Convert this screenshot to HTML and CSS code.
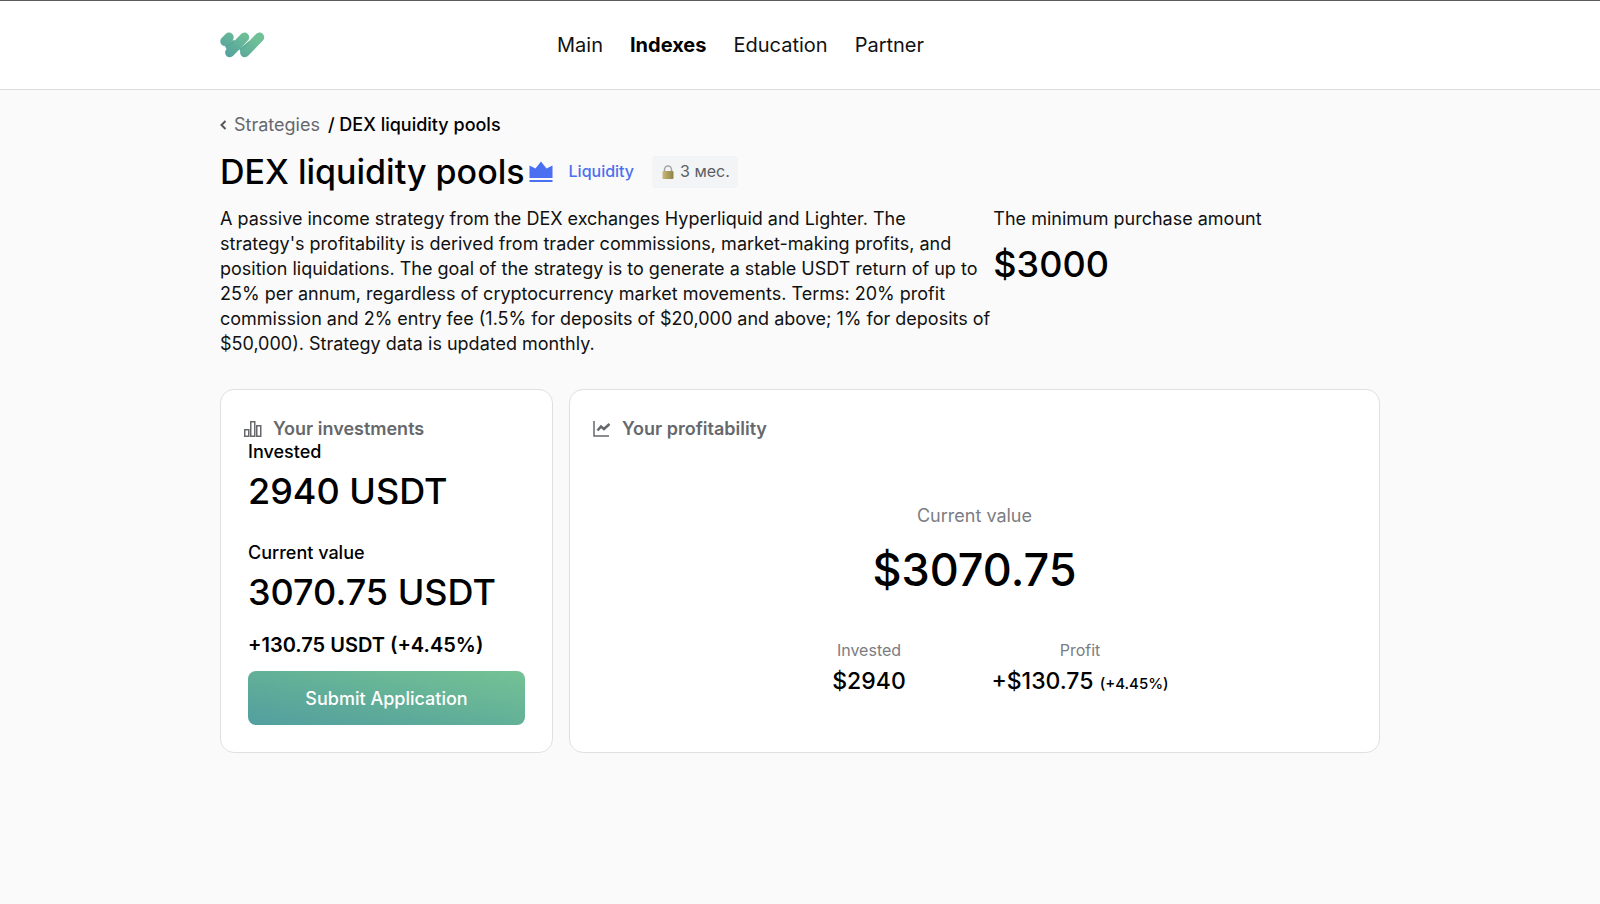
FILE: index.html
```html
<!DOCTYPE html>
<html lang="en">
<head>
<meta charset="utf-8">
<title>DEX liquidity pools</title>
<link rel="stylesheet" href="styles.css">
</head>
<body>
<header class="header">
  <div class="container header-inner">
    <a class="logo" href="#" aria-label="Home">
      <svg width="45" height="26" viewBox="0 0 45 26" fill="none" stroke-linecap="round" stroke-width="9.500">
        <defs>
          <linearGradient id="brand" gradientUnits="userSpaceOnUse" x1="6" y1="26" x2="24" y2="0">
            <stop offset="0" stop-color="#529fa0"/>
            <stop offset="1" stop-color="#6fc096"/>
          </linearGradient>
        </defs>
        <path stroke="url(#brand)" d="M9 5.300 5 9.300M24.500 5.300 9.800 20.500M39.500 5.300 24.800 20.500"/>
        <path fill="url(#brand)" d="M5 14 13 8l4 1-10 9zM19 17l10-8 3 1-11 10z"/>
        <path d="M5.500 14.300Q10 14.300 13.500 10.500M21 17Q25.500 14.500 29 10.500" stroke="#4b969b" stroke-width="0.700" opacity="0.600"/>
      </svg>
    </a>
    <nav class="nav">
      <a href="#">Main</a>
      <a href="#" class="active">Indexes</a>
      <a href="#">Education</a>
      <a href="#">Partner</a>
    </nav>
  </div>
</header>
<main class="container">
  <nav class="crumbs" aria-label="Breadcrumb">
    <a href="#"><svg width="7" height="10" viewBox="0 0 7 10" fill="none" stroke="#55575a" stroke-width="2"><path d="M5.500 1 1.500 5l4 4"/></svg>Strategies</a>
    <span>/ DEX liquidity pools</span>
  </nav>
  <div class="title-row">
    <h1>DEX liquidity pools</h1>
    <svg class="crown" width="24" height="22" viewBox="0 0 24 22" fill="#4a6ff0"><path d="M.5 4.500 6.500 7.500 12 .5l5.500 7 6-3V17H.5zM.5 19h23v2H.5z"/></svg>
    <span class="tag">Liquidity</span>
    <span class="term">
      <svg width="12" height="14" viewBox="0 0 12 14"><defs><linearGradient id="brass"><stop offset="0" stop-color="#c9b978"/><stop offset="1" stop-color="#8f8244"/></linearGradient></defs><path d="M2.500 7V4.500a3.500 3.500 0 0 1 7 0V7" fill="none" stroke="#a3a5a6" stroke-width="1.500"/><rect x=".5" y="6" width="11" height="8" rx="1" fill="url(#brass)"/></svg>
      3 мес.
    </span>
  </div>
  <section class="intro">
    <p class="description">A passive income strategy from the DEX exchanges Hyperliquid and Lighter. The strategy's profitability is derived from trader commissions, market-making profits, and position liquidations. The goal of the strategy is to generate a stable USDT return of up to 25% per annum, regardless of cryptocurrency market movements. Terms: 20% profit commission and 2% entry fee (1.5% for deposits of $20,000 and above; 1% for deposits of $50,000). Strategy data is updated monthly.</p>
    <div class="minimum">
      <p>The minimum purchase amount</p>
      <p class="amount">$3000</p>
    </div>
  </section>
  <div class="cards">
    <section class="card">
      <h2><svg width="18" height="16" viewBox="0 0 18 16" fill="none" stroke="#66686c" stroke-width="1.500"><path d="M.75 8.750h4v6.500h-4zM6.750.75h4v14.500h-4zM12.750 4.750h4v10.500h-4z"/></svg>Your investments</h2>
      <p class="label">Invested</p>
      <p class="amount spaced">2940 USDT</p>
      <p class="label">Current value</p>
      <p class="amount">3070.75 USDT</p>
      <p class="gain">+130.75 USDT (+4.45%)</p>
      <button class="submit" type="button">Submit Application</button>
    </section>
    <section class="card">
      <h2><svg width="18" height="16" viewBox="0 0 18 16" fill="none" stroke="#66686c"><path d="M1 0v15h15" stroke-width="1.500"/><path d="m4.500 9.500 3.500-4 3 2.500 5.500-5" stroke-width="2.500"/></svg>Your profitability</h2>
      <div class="summary">
        <p class="summary-label">Current value</p>
        <p class="total">$3070.75</p>
        <dl class="stats">
          <div><dt>Invested</dt><dd>$2940</dd></div>
          <div><dt>Profit</dt><dd>+$130.75 <small>(+4.45%)</small></dd></div>
        </dl>
      </div>
    </section>
  </div>
</main>
</body>
</html>
```
FILE: styles.css
```css
* { box-sizing: border-box; }
body { margin: 0; background: #fafafa; color: #000; font-family: Inter, "Noto Sans", sans-serif; font-size: 18px; line-height: 25px; }
h1, h2, p, dl, dd { margin: 0; }
a { color: inherit; text-decoration: none; }
svg { flex: none; }
.container { width: 100%; max-width: 1200px; margin: 0 auto; padding: 0 20px; }
.header { background: #fff; border-top: 1px solid #5c5c5f; border-bottom: 1px solid #dcdcdd; }
.header-inner { display: grid; grid-template-columns: 337px 1fr; align-items: center; height: 88px; }
.logo { display: flex; }
.nav { display: flex; gap: 27px; font-size: 20px; color: #111; }
.nav .active { font-weight: 700; color: #000; }
.crumbs { display: flex; gap: 8px; padding-top: 22px; font-weight: 500; }
.crumbs a { display: flex; align-items: center; gap: 7px; font-weight: 400; color: #66686c; }
.title-row { display: flex; align-items: center; height: 69px; }
h1 { font-size: 34px; line-height: 44px; font-weight: 500; }
.crown { margin-left: 4px; }
.tag { margin: 0 18px 0 16px; font-size: 16px; font-weight: 500; color: #4a6ff0; }
.term { display: flex; align-items: center; gap: 6px; height: 32px; padding: 0 8px 0 10px; border-radius: 4px; background: #f3f4f6; color: #5c5e62; font-size: 16px; }
.intro { display: grid; grid-template-columns: 2fr 1fr; color: #111; }
.amount { font-size: 36px; line-height: 44px; font-weight: 500; color: #000; }
.minimum .amount { margin-top: 11px; }
.cards { display: grid; grid-template-columns: 333fr 811fr; gap: 16px; margin-top: 33px; }
.card { display: flex; flex-direction: column; padding: 27px; border: 1px solid #e0e0e1; border-radius: 14px; background: #fff; }
h2 { display: flex; align-items: center; gap: 11px; margin-left: -4px; font-size: 18px; line-height: 24px; font-weight: 600; color: #66686c; }
.label { font-weight: 500; line-height: 22px; }
.card .amount { margin-top: 6px; }
.card .spaced { margin-bottom: 29px; }
.gain { margin-top: 19px; font-size: 20px; font-weight: 600; }
.submit { height: 54px; margin-top: 13px; border: 0; border-radius: 8px; background: linear-gradient(to top right, #529fa0, #5eaa9a 35%, #68b697 65%, #74c294); color: #fff; font: inherit; font-weight: 500; cursor: pointer; }
.summary { flex: 1; display: flex; flex-direction: column; align-items: center; justify-content: center; padding-top: 34px; }
.summary-label { color: #7b7d82; }
.total { margin-top: 14px; font-size: 45px; line-height: 56px; font-weight: 500; }
.stats { display: grid; grid-template-columns: 1fr 1fr; width: 422px; margin-top: 40px; text-align: center; }
dt { font-size: 16px; color: #7b7d82; }
dd { margin-top: 4px; font-size: 23px; line-height: 28px; font-weight: 500; white-space: nowrap; }
dd small { font-size: 15px; }
```
